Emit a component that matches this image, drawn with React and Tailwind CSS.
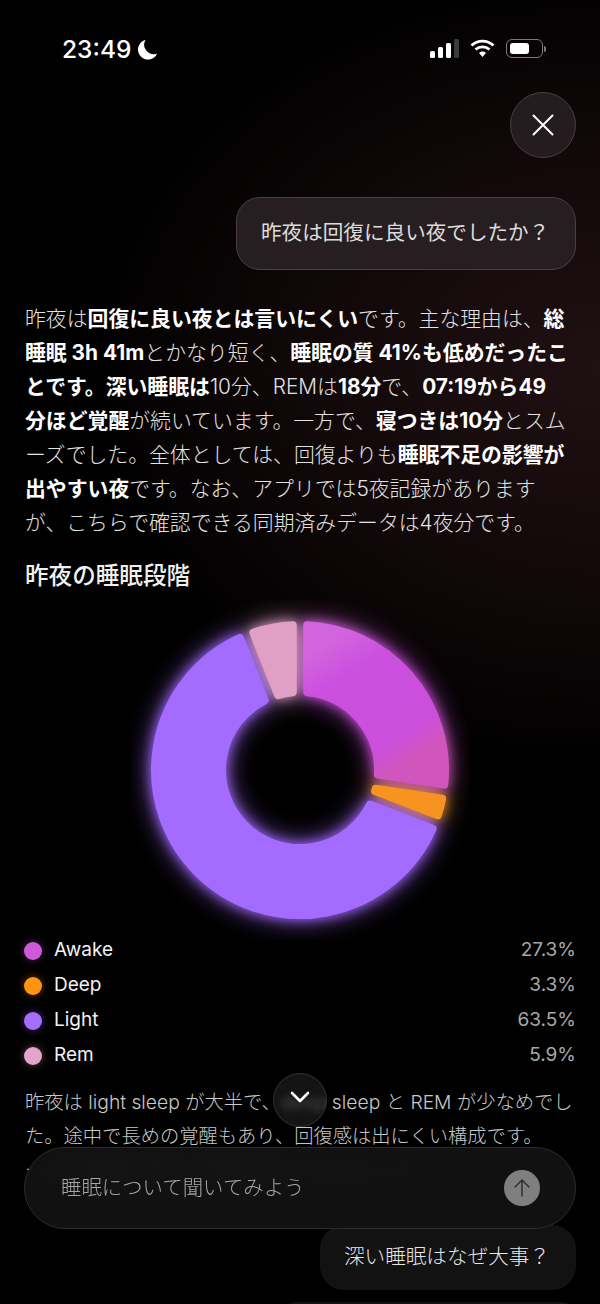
const CX = 170;
const CY = 170;
const RO = 145;
const RI = 78;

const segments = [
  { name: 'Awake', value: '27.3%', dot: 'bg-[#cf5ad9] shadow-[0_0_8px_#cf5ad966]', fill: 'url(#awake)', from: 0, to: 98.6 },
  { name: 'Deep', value: '3.3%', dot: 'bg-[#ff9410] shadow-[0_0_8px_#ff941066]', fill: '#f7931f', from: 98.6, to: 111 },
  { name: 'Light', value: '63.5%', dot: 'bg-[#a56eff] shadow-[0_0_8px_#a56eff66]', fill: '#a46bff', from: 111, to: 338.4 },
  { name: 'Rem', value: '5.9%', dot: 'bg-[#e3a5c8] shadow-[0_0_8px_#e3a5c866]', fill: '#e0a0c6', from: 338.4, to: 360 },
];

function polar(r, deg) {
  const a = ((deg - 90) * Math.PI) / 180;
  return `${(CX + r * Math.cos(a)).toFixed(2)} ${(CY + r * Math.sin(a)).toFixed(2)}`;
}

// sector with a gap of constant width; the stroke rounds its corners
function sectorPath(from, to) {
  const gap = 7.2;
  const o = (Math.asin(gap / RO) * 180) / Math.PI;
  const i = (Math.asin(gap / RI) * 180) / Math.PI;
  const large = to - from > 180 ? 1 : 0;
  return [
    `M ${polar(RO, from + o)}`,
    `A ${RO} ${RO} 0 ${large} 1 ${polar(RO, to - o)}`,
    `L ${polar(RI, to - i)}`,
    `A ${RI} ${RI} 0 ${large} 0 ${polar(RI, from + i)}`,
    'Z',
  ].join(' ');
}

function Donut() {
  const shapes = segments.map((s) => (
    <path key={s.name} d={sectorPath(s.from, s.to)} fill={s.fill} stroke={s.fill} strokeWidth="8" strokeLinejoin="round" />
  ));
  return (
    <svg width="340" height="340" viewBox="0 0 340 340" className="block">
      <defs>
        <linearGradient id="awake" x1="0" y1="0.2" x2="0.45" y2="1">
          <stop offset="0" stopColor="#d264dd" />
          <stop offset="0.25" stopColor="#cb50e0" />
          <stop offset="0.85" stopColor="#cc4fda" />
          <stop offset="1" stopColor="#d056bd" />
        </linearGradient>
        <filter id="glowWide" x="-25%" y="-25%" width="150%" height="150%">
          <feGaussianBlur stdDeviation="13" />
        </filter>
        <filter id="glow" x="-20%" y="-20%" width="140%" height="140%">
          <feGaussianBlur stdDeviation="6" />
        </filter>
      </defs>
      <g filter="url(#glowWide)" opacity="0.8">{shapes}</g>
      <g filter="url(#glow)" opacity="0.85">{shapes}</g>
      {shapes}
    </svg>
  );
}

function StatusBar() {
  return (
    <div className="flex h-[92px] items-start justify-between pl-[62px] pr-[54px] pt-[34px]">
      <div className="flex items-center gap-[6px]">
        <span className="text-[24.5px] leading-[30px] font-medium text-white font-['Inter']">23:49</span>
        <svg width="21" height="21" viewBox="0 0 21 21">
          <path d="M8.6 0.8 A10 10 0 1 0 20.2 14.4 A9.4 9.4 0 0 1 8.6 0.8 Z" fill="#fff" />
        </svg>
      </div>
      <div className="flex items-center gap-[11px] pt-[5px]">
        <div className="flex items-end gap-[3px]">
          <div className="h-[7px] w-[5px] rounded-[1.5px] bg-white" />
          <div className="h-[11px] w-[5px] rounded-[1.5px] bg-white" />
          <div className="h-[15px] w-[5px] rounded-[1.5px] bg-white" />
          <div className="h-[19px] w-[5px] rounded-[1.5px] bg-[#3a3a3a]" />
        </div>
        <svg width="25" height="19" viewBox="0 0 25 19">
          <path d="M1.5 6.5 A16 16 0 0 1 23.5 6.5 M5.5 10.5 A10.5 10.5 0 0 1 19.5 10.5" fill="none" stroke="#fff" strokeWidth="2.8" />
          <path d="M9 14 A5.5 5.5 0 0 1 16 14 L12.5 18 Z" fill="#fff" />
        </svg>
        <div className="flex items-center gap-[1px]">
          <div className="h-[19px] w-[37px] rounded-[6px] border border-[#7a7a7a] p-[3px]">
            <div className="h-full w-[19px] rounded-[3px] bg-white" />
          </div>
          <div className="h-[6px] w-[2px] rounded-r-full bg-[#7a7a7a]" />
        </div>
      </div>
    </div>
  );
}

function App() {
  return (
    <div className="relative h-[1304px] w-[600px] overflow-hidden bg-black bg-[radial-gradient(ellipse_520px_400px_at_600px_370px,#1f1013_0%,#110809_55%,#000000_100%)] font-['Inter','Noto_Sans_CJK_JP',sans-serif]">
      <StatusBar />

      <div className="flex justify-end pr-6">
        <button className="flex h-[66px] w-[66px] items-center justify-center rounded-full border border-[#4a3f41] bg-[#241c1e]">
          <svg width="22" height="22" viewBox="0 0 22 22">
            <path d="M1.5 1.5 L20.5 20.5 M20.5 1.5 L1.5 20.5" stroke="#fff" strokeWidth="2" strokeLinecap="round" />
          </svg>
        </button>
      </div>

      <div className="mt-[39px] flex justify-end pr-6">
        <div className="flex h-[73px] w-[340px] items-center rounded-[24px] border border-[#4c3f42] bg-[#271e21] pl-6 text-[20.6px] text-[#dcdcdc]">
          昨夜は回復に良い夜でしたか？
        </div>
      </div>

      <div className="px-[25px]">
        <p className="mt-8 whitespace-nowrap text-[20.85px] leading-[34px] font-light text-[#e2e2e2]">
          昨夜は<b className="font-bold text-white">回復に良い夜とは言いにくい</b>です。主な理由は、<b className="font-bold text-white">総</b>
          <br />
          <b className="font-bold text-white">睡眠 3h 41m</b>とかなり短く、<b className="font-bold text-white">睡眠の質 41%も低めだったこ</b>
          <br />
          <b className="font-bold text-white">とです。深い睡眠は</b>10分、REMは<b className="font-bold text-white">18分</b>で、<b className="font-bold text-white">07:19から49</b>
          <br />
          <b className="font-bold text-white">分ほど覚醒</b>が続いています。一方で、<b className="font-bold text-white">寝つきは10分</b>とスム
          <br />
          ーズでした。全体としては、回復よりも<b className="font-bold text-white">睡眠不足の影響が</b>
          <br />
          <b className="font-bold text-white">出やすい夜</b>です。なお、アプリでは5夜記録があります
          <br />
          が、こちらで確認できる同期済みデータは4夜分です。
        </p>

        <h2 className="mt-[19px] text-[23.6px] leading-[34px] font-medium text-[#f0f0f0]">昨夜の睡眠段階</h2>
      </div>

      <div className="mt-[7px] flex justify-center">
        <Donut />
      </div>

      <div className="-mt-[7px] flex flex-col px-6">
        {segments.map((s) => (
          <div key={s.name} className="flex h-[35px] items-center justify-between">
            <div className="flex items-center gap-3">
              <div className={`h-[18px] w-[18px] rounded-full ${s.dot}`} />
              <span className="text-[19px] text-[#f2f2f2]">{s.name}</span>
            </div>
            <span className="text-[19px] text-[#a8a8a8]">{s.value}</span>
          </div>
        ))}
      </div>

      <p className="mt-[12px] whitespace-nowrap px-[25px] text-[19.3px] leading-[34px] font-light text-[#c8c8c8]">
        昨夜は light sleep が大半で、deep sleep と REM が少なめでし
        <br />
        た。途中で長めの覚醒もあり、回復感は出にくい構成です。
        <br />
        ー 深い睡眠を増やす習慣を試してみましょう。
      </p>

      <button className="absolute left-[273px] top-[1073px] flex h-[54px] w-[54px] items-center justify-center rounded-full border border-[#333333] bg-[#1c1c1c]/70 backdrop-blur-[3px]">
        <svg width="22" height="14" viewBox="0 0 22 14" className="-mt-[6px]">
          <path d="M3 3 L11 11 L19 3" fill="none" stroke="#fff" strokeWidth="2.6" strokeLinecap="round" strokeLinejoin="round" />
        </svg>
      </button>

      <div className="absolute inset-x-0 top-[1147px] px-6">
        <div className="relative z-10 flex h-[82px] items-center justify-between rounded-[41px] border border-[#2c2c2c] bg-[#131313]/90 pl-[36px] pr-[35px] backdrop-blur-md">
          <span className="text-[20.4px] font-light text-[#a6a6a6]">睡眠について聞いてみよう</span>
          <div className="flex h-[36px] w-[36px] items-center justify-center rounded-full bg-[#7f7f7f]">
            <svg width="18" height="20" viewBox="0 0 18 20">
              <path d="M9 18 L9 2 M2 9 L9 2 L16 9" fill="none" stroke="#2c2c2c" strokeWidth="1.4" strokeLinecap="round" strokeLinejoin="round" />
            </svg>
          </div>
        </div>
        <div className="-mt-[4px] flex justify-end">
          <div className="flex h-[65px] w-[256px] items-center rounded-[24px] bg-[#121212] pl-6 text-[20.6px] font-light text-[#e6e6e6]">
            深い睡眠はなぜ大事？
          </div>
        </div>
        <div className="mt-[12px] ml-[257px] h-[30px] w-[295px] rounded-[24px] bg-[#121212]" />
      </div>
    </div>
  );
}

export default App;
